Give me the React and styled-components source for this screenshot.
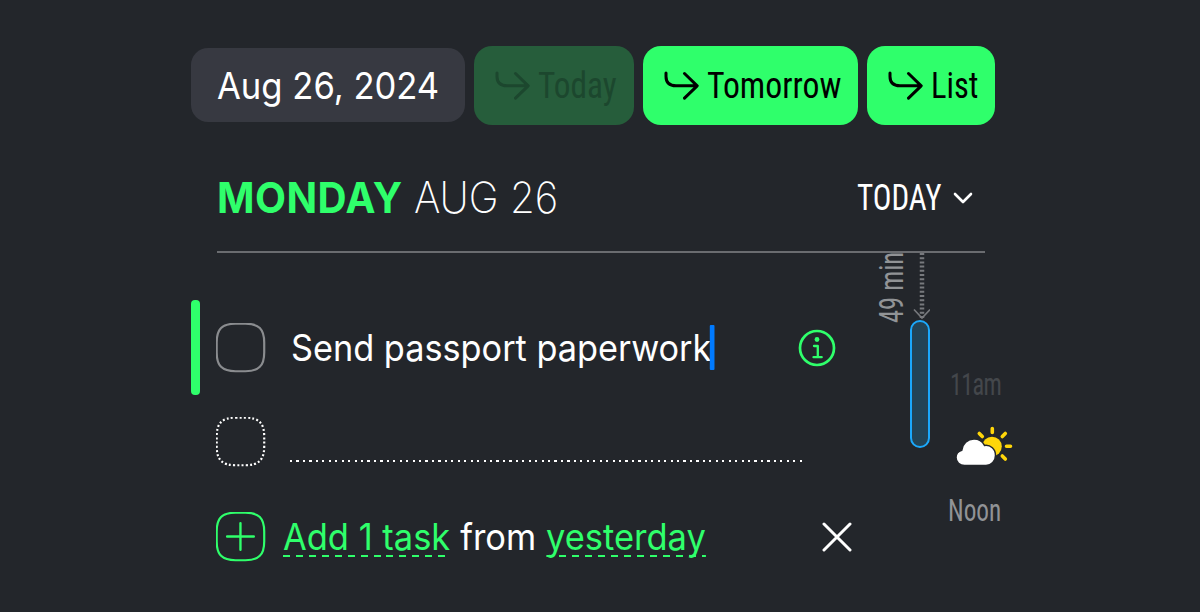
import React from "react";
import styled, { createGlobalStyle } from "styled-components";

const green = "#2fff6b";

const GlobalStyle = createGlobalStyle`
  * {
    box-sizing: border-box;
  }
  body {
    margin: 0;
    background: #23262b;
  }
  svg {
    display: block;
    flex-shrink: 0;
  }
`;

const Page = styled.div`
  width: 1200px;
  height: 612px;
  padding: 46px 0 0 191px;
  overflow: hidden;
  background: #23262b;
  color: white;
  font-family: "Inter", sans-serif;
`;

const Toolbar = styled.div`
  display: flex;
  gap: 9px;
`;

const DateField = styled.div`
  width: 274px;
  height: 74px;
  margin-top: 2px;
  padding-left: 26px;
  border-radius: 17px;
  background: #373941;
  font-size: 36.5px;
  line-height: 77px;
  white-space: nowrap;
`;

const Squeezed = styled.span`
  display: inline-flex;
  align-items: center;
  gap: ${(props) => props.$gap || 0}px;
  transform: scaleX(${(props) => props.$scale});
  transform-origin: left center;
`;

const MoveButton = styled.button`
  display: flex;
  align-items: center;
  width: ${(props) => props.$width}px;
  height: 78.5px;
  padding: 2px 0 0 21px;
  gap: 8px;
  border: none;
  border-radius: 18px;
  background: ${(props) => (props.disabled ? "#265d3b" : green)};
  color: ${(props) => (props.disabled ? "#1c472e" : "#000")};
`;

const Condensed = styled.span`
  display: inline-block;
  font-family: "Roboto", sans-serif;
  font-stretch: 75%;
  font-size: ${(props) => props.$size}px;
  line-height: 1.2;
  letter-spacing: ${(props) => props.$spacing || 0}px;
  white-space: nowrap;
  transform: scaleX(${(props) => props.$scale || 1});
  transform-origin: left center;
`;

const Header = styled.header`
  display: flex;
  align-items: center;
  justify-content: space-between;
  width: 768px;
  height: 128px;
  margin-left: 26px;
  padding-top: 20px;
  border-bottom: 2px solid #6a6c70;
`;

const Title = styled.h1`
  margin: 0;
  font-size: 43px;
  font-weight: 200;
  line-height: 1.2;
  white-space: nowrap;
`;

const Weekday = styled.span`
  color: ${green};
  font-weight: 700;
  letter-spacing: 0.5px;
`;

const DayPicker = styled.div`
  display: flex;
  align-items: center;
  width: 128px;
`;

const DayName = styled.div`
  width: 96px;
  padding-top: 2px;
`;

const Body = styled.div`
  display: flex;
`;

const Tasks = styled.div`
  width: 687px;
  padding-top: 48px;
`;

const TaskRow = styled.div`
  display: flex;
  align-items: center;
  height: 94.5px;
`;

const Marker = styled.div`
  width: 9px;
  height: 95px;
  margin-right: 16px;
  border-radius: 4px;
  background: ${(props) => (props.$active ? green : "transparent")};
`;

const TaskText = styled.div`
  width: 532px;
  padding-left: 25px;
  font-size: 36.5px;
  white-space: nowrap;
`;

const Caret = styled.span`
  width: 5px;
  height: 45px;
  margin-left: -2px;
  border-radius: 1px;
  background: #007aff;
`;

const EmptyLine = styled.div`
  width: 513px;
  height: 2px;
  margin: 37px 0 0 24px;
  background: repeating-linear-gradient(
    90deg,
    #fff 0 2.2px,
    transparent 2.2px 6.45px
  );
`;

const Suggestion = styled.div`
  width: 555px;
  padding: 1px 0 0 17px;
  font-size: 36.5px;
  line-height: 44px;
  white-space: nowrap;
`;

const Link = styled.span`
  color: ${green};
  background: repeating-linear-gradient(
      90deg,
      ${green} 0 7.4px,
      transparent 7.4px 13.7px
    )
    0 40px / 100% 2px no-repeat;
`;

const Timeline = styled.div`
  display: flex;
  height: 300px;
`;

const Duration = styled.div`
  width: 32px;
  height: 70px;
  color: #919396;
  writing-mode: vertical-rl;
  transform: rotate(180deg);
`;

// runs bottom to top, so it is squeezed on the other axis
const DurationText = styled(Condensed)`
  line-height: 27px;
  transform: scaleY(${(props) => props.$scale});
  transform-origin: center top;
`;

const Track = styled.div`
  display: flex;
  flex-direction: column;
  align-items: center;
  width: 20px;
`;

const Event = styled.div`
  width: 20px;
  height: 128px;
  border: 2px solid #1ba8fb;
  border-radius: 10px;
  background: #234355;
`;

const Hours = styled.div`
  display: flex;
  flex-direction: column;
  padding: 112px 0 0 18px;

  svg {
    margin: 22px 0 24px 7px;
  }
`;

const Hour = styled.div`
  height: 38px;
  padding-left: ${(props) => (props.$past ? 2 : 0)}px;
  color: ${(props) => (props.$past ? "#44474b" : "#919396")};
`;

const ArrowIcon = () => (
  <svg width="35" height="30" viewBox="0 0 35 30" fill="none" stroke="currentColor" strokeWidth="3" strokeLinecap="round" strokeLinejoin="round">
    <path d="M2 2v3.500c0 6.200 3.800 9.300 10 9.300h21M20.500 2.500 33.200 14.800 20.500 27.100" />
  </svg>
);

const squircle =
  "M20 1h10c13.500 0 19 5.500 19 19v10c0 13.500-5.500 19-19 19H20C6.500 49 1 43.500 1 30V20C1 6.500 6.500 1 20 1z";

const CheckBox = ({ color, dotted, plus }) => (
  <svg width="50" height="50" viewBox="0.300 0.300 50.500 50.500" fill="none" stroke={color} strokeWidth="2.200">
    <path d={squircle} strokeDasharray={dotted ? "2 2.2" : undefined} />
    {plus && <path d="M25 11.500v27M11.500 25h27" strokeWidth="2.400" strokeLinecap="round" />}
  </svg>
);

const InfoIcon = () => (
  <svg width="38" height="38" viewBox="0 0 38 38" fill="none" stroke={green} strokeLinecap="round" strokeLinejoin="round">
    <circle cx="19" cy="19" r="17" strokeWidth="2.700" />
    <circle cx="19" cy="10.500" r="2.400" fill={green} stroke="none" />
    <path d="M16 17h3.800v11M15.500 28.200h8.200" strokeWidth="2.300" />
  </svg>
);

const WeatherIcon = () => (
  <svg width="58" height="42" viewBox="0 0 58 42">
    <g stroke="#ffd60a" strokeWidth="3.600" strokeLinecap="round">
      <path d="M37.300 3.500v4M24.300 8.500l3 3M50.300 8.500l-3 3M51.500 21.300h4M47.300 31l3 3" />
    </g>
    <circle cx="37" cy="21.500" r="9.800" fill="#ffd60a" />
    <path d="M9.500 40.500C4.800 40.500 1 37 1 32.500c0-3.800 2.500-6.500 5.800-7.300C7.400 19 12.500 14 19 14c4.500 0 8.400 2.400 10.500 6.400 6.200-.8 11 3.700 11 10 0 5.800-4.100 10.100-9.500 10.100z" fill="#fff" stroke="#23262b" strokeWidth="1.500" />
  </svg>
);

export default function App() {
  return (
    <Page>
      <GlobalStyle />
      <Toolbar>
        <DateField>
          <Squeezed $scale={0.948}>Aug 26, 2024</Squeezed>
        </DateField>
        <MoveButton $width={160} disabled>
          <ArrowIcon />
          <Condensed $size={37} $scale={0.9}>Today</Condensed>
        </MoveButton>
        <MoveButton $width={215}>
          <ArrowIcon />
          <Condensed $size={37} $scale={0.912}>Tomorrow</Condensed>
        </MoveButton>
        <MoveButton $width={128}>
          <ArrowIcon />
          <Condensed $size={37} $scale={0.88}>List</Condensed>
        </MoveButton>
      </Toolbar>
      <Header>
        <Title>
          <Squeezed $scale={0.936} $gap={12}>
            <Weekday>MONDAY</Weekday>
            <span>AUG 26</span>
          </Squeezed>
        </Title>
        <DayPicker>
          <DayName>
            <Condensed $size={37} $scale={0.84}>TODAY</Condensed>
          </DayName>
          <svg width="20" height="13" viewBox="0 0 20 13" fill="none" stroke="#fff" strokeWidth="2.600" strokeLinecap="round" strokeLinejoin="round">
            <path d="M2 3l8 8 8-8" />
          </svg>
        </DayPicker>
      </Header>
      <Body>
        <Tasks>
          <TaskRow>
            <Marker $active />
            <CheckBox color="#8a8c8f" />
            <TaskText>
              <Squeezed $scale={0.939}>
                Send passport paperwork
                <Caret />
              </Squeezed>
            </TaskText>
            <InfoIcon />
          </TaskRow>
          <TaskRow>
            <Marker />
            <CheckBox color="#fff" dotted />
            <EmptyLine />
          </TaskRow>
          <TaskRow>
            <Marker />
            <CheckBox color={green} plus />
            <Suggestion>
              <Squeezed $scale={0.944} $gap={10.5}>
                <Link>Add 1 task</Link>
                <span>from</span>
                <Link>yesterday</Link>
              </Squeezed>
            </Suggestion>
            <svg width="31" height="30" viewBox="-1 0 31 30" stroke="#fff" strokeWidth="3" strokeLinecap="round">
              <path d="M2 2l26 26M28 2L2 28" />
            </svg>
          </TaskRow>
        </Tasks>
        <Timeline>
          <Duration>
            <DurationText $size={34} $scale={0.78}>49 min</DurationText>
          </Duration>
          <Track>
            <svg width="20" height="67" viewBox="0 0 20 67" fill="none" stroke="#77797d">
              <path d="M12 0v65" strokeWidth="4.500" strokeDasharray="2 2.200" />
              <path d="M4 56.500l8 8.500 8-8.500" strokeWidth="1.600" />
            </svg>
            <Event />
          </Track>
          <Hours>
            <Hour $past>
              <Condensed $size={32} $scale={0.76} $spacing={-1}>11am</Condensed>
            </Hour>
            <WeatherIcon />
            <Hour>
              <Condensed $size={32} $scale={0.79}>Noon</Condensed>
            </Hour>
          </Hours>
        </Timeline>
      </Body>
    </Page>
  );
}
